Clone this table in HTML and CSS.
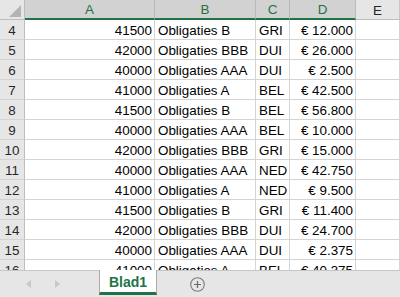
FILE: index.html
```html
<!DOCTYPE html>
<html>
<head>
<meta charset="utf-8">
<link rel="stylesheet" href="styles.css">
</head>
<body>
<div class="app">
  <div class="sheet">
    <div class="grid">
      <div class="corner"><span class="tri"></span></div>
      <div class="colhead sel">A</div>
      <div class="colhead sel">B</div>
      <div class="colhead sel">C</div>
      <div class="colhead sel">D</div>
      <div class="colhead">E</div>

      <div class="rowhead">4</div><div class="cell num">41500</div><div class="cell">Obligaties B</div><div class="cell">GRI</div><div class="cell num">€ 12.000</div><div class="cell"></div>
      <div class="rowhead">5</div><div class="cell num">42000</div><div class="cell">Obligaties BBB</div><div class="cell">DUI</div><div class="cell num">€ 26.000</div><div class="cell"></div>
      <div class="rowhead">6</div><div class="cell num">40000</div><div class="cell">Obligaties AAA</div><div class="cell">DUI</div><div class="cell num">€ 2.500</div><div class="cell"></div>
      <div class="rowhead">7</div><div class="cell num">41000</div><div class="cell">Obligaties A</div><div class="cell">BEL</div><div class="cell num">€ 42.500</div><div class="cell"></div>
      <div class="rowhead">8</div><div class="cell num">41500</div><div class="cell">Obligaties B</div><div class="cell">BEL</div><div class="cell num">€ 56.800</div><div class="cell"></div>
      <div class="rowhead">9</div><div class="cell num">40000</div><div class="cell">Obligaties AAA</div><div class="cell">BEL</div><div class="cell num">€ 10.000</div><div class="cell"></div>
      <div class="rowhead">10</div><div class="cell num">42000</div><div class="cell">Obligaties BBB</div><div class="cell">GRI</div><div class="cell num">€ 15.000</div><div class="cell"></div>
      <div class="rowhead">11</div><div class="cell num">40000</div><div class="cell">Obligaties AAA</div><div class="cell">NED</div><div class="cell num">€ 42.750</div><div class="cell"></div>
      <div class="rowhead">12</div><div class="cell num">41000</div><div class="cell">Obligaties A</div><div class="cell">NED</div><div class="cell num">€ 9.500</div><div class="cell"></div>
      <div class="rowhead">13</div><div class="cell num">41500</div><div class="cell">Obligaties B</div><div class="cell">GRI</div><div class="cell num">€ 11.400</div><div class="cell"></div>
      <div class="rowhead">14</div><div class="cell num">42000</div><div class="cell">Obligaties BBB</div><div class="cell">DUI</div><div class="cell num">€ 24.700</div><div class="cell"></div>
      <div class="rowhead">15</div><div class="cell num">40000</div><div class="cell">Obligaties AAA</div><div class="cell">DUI</div><div class="cell num">€ 2.375</div><div class="cell"></div>
      <div class="rowhead">16</div><div class="cell num">41000</div><div class="cell">Obligaties A</div><div class="cell">BEL</div><div class="cell num">€ 40.375</div><div class="cell"></div>
    </div>
  </div>
  <div class="tabbar">
    <div class="nav">
      <span class="arrow left"></span>
      <span class="arrow right"></span>
    </div>
    <div class="tab">Blad1</div>
    <div class="add">
      <svg width="15" height="15" viewBox="0 0 15 15"><circle cx="7.5" cy="7.5" r="6.8" fill="none" stroke="#7a7a7a" stroke-width="1.1"/><path d="M7.5 4v7M4 7.5h7" stroke="#6a6a6a" stroke-width="1.2"/></svg>
    </div>
  </div>
</div>
</body>
</html>
```

FILE: styles.css
```css
html, body {
  margin: 0;
  padding: 0;
}
body {
  font-family: "Liberation Sans", Arial, sans-serif;
  font-size: 13.4px;
  color: #000;
  background: #fff;
  overflow: hidden;
}
.app {
  width: 400px;
  height: 297px;
  display: flex;
  flex-direction: column;
  overflow: hidden;
}
.sheet {
  height: 270px;
  overflow: hidden;
  flex: none;
}
.grid {
  display: grid;
  grid-template-columns: 25px 130px 101px 34px 66px 1fr;
  grid-auto-rows: 20px;
}
.grid > div {
  box-sizing: border-box;
}
.corner {
  background: #e6e6e6;
  border-right: 1px solid #bdbdbd;
  border-bottom: 1px solid #bdbdbd;
  position: relative;
}
.tri {
  position: absolute;
  left: 9px;
  top: 5px;
  width: 0;
  height: 0;
  border-left: 12px solid transparent;
  border-bottom: 12px solid #b4b4b4;
}
.colhead {
  background: #e6e6e6;
  border-right: 1px solid #c6c6c6;
  border-bottom: 1px solid #bdbdbd;
  display: flex;
  align-items: center;
  justify-content: center;
  color: #262626;
  padding-top: 1px;
}
.colhead.sel {
  background: #d2d2d2;
  color: #217346;
  border-bottom: 2px solid #217346;
  border-right-color: #bababa;
}
.rowhead {
  background: #e6e6e6;
  border-right: 1px solid #bdbdbd;
  border-bottom: 1px solid #d4d4d4;
  display: flex;
  align-items: center;
  justify-content: center;
  color: #262626;
  padding-top: 1px;
}
.cell {
  border-right: 1px solid #d4d4d4;
  border-bottom: 1px solid #d4d4d4;
  display: flex;
  align-items: center;
  padding: 1px 3px 0 3px;
  white-space: nowrap;
  overflow: hidden;
}
.cell.num {
  justify-content: flex-end;
  padding-right: 2px;
}
.tabbar {
  flex: 1;
  background: #e6e6e6;
  border-top: 1px solid #c6c6c6;
  display: flex;
  align-items: stretch;
  position: relative;
}
.nav {
  width: 99px;
  display: flex;
  align-items: center;
  padding-left: 26px;
  box-sizing: border-box;
  gap: 24px;
}
.arrow {
  width: 0;
  height: 0;
  border-top: 4px solid transparent;
  border-bottom: 4px solid transparent;
}
.arrow.left {
  border-right: 5px solid #c8c8c8;
}
.arrow.right {
  border-left: 5px solid #c8c8c8;
}
.tab {
  width: 58px;
  box-sizing: border-box;
  margin-top: -1px;
  background: #fff;
  border-left: 1px solid #ababab;
  border-right: 1px solid #ababab;
  border-bottom: 3px solid #217346;
  color: #217346;
  font-weight: bold;
  font-size: 14px;
  display: flex;
  align-items: center;
  justify-content: center;
  padding-top: 1px;
  margin-bottom: 2px;
}
.add {
  display: flex;
  align-items: center;
  padding-left: 33px;
}
```
